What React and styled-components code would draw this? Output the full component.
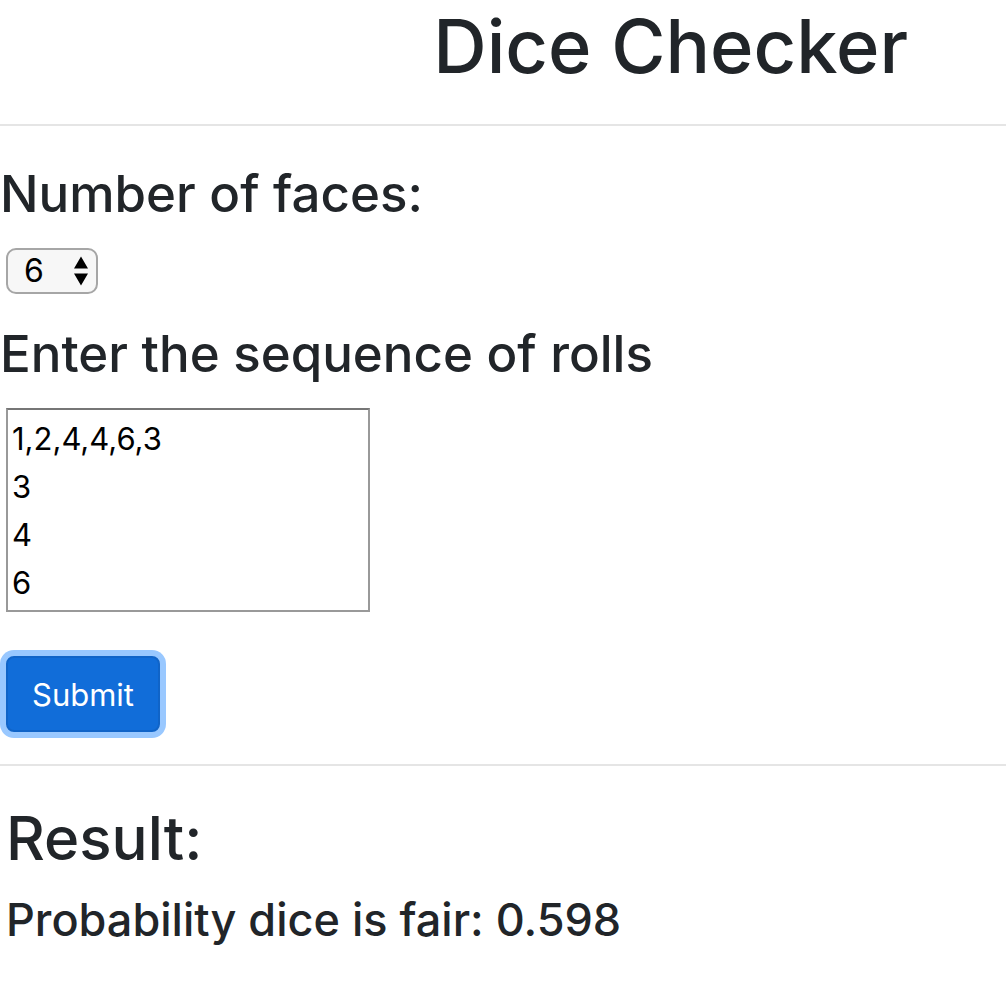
import React, { useState } from "react";
import styled, { createGlobalStyle } from "styled-components";

const Global = createGlobalStyle`
  *, *::before, *::after { box-sizing: border-box; }
  body {
    margin: 0;
    background: #fff;
    color: #212529;
    font-family: Inter, "Liberation Sans", sans-serif;
  }
`;

const Header = styled.header`
  padding: 0 98px 32px 0;
  border-bottom: 2px solid #e5e5e5;
  display: flex;
  justify-content: flex-end;
`;

const Heading = styled.h1`
  margin: 0;
  font-size: ${(p) => p.$size}px;
  line-height: ${(p) => p.$line}px;
  font-weight: 500;
`;

const Form = styled.form`
  padding: 32px 0;
  border-bottom: 2px solid #e5e5e5;
  display: flex;
  flex-direction: column;
  align-items: flex-start;
`;

const FieldLabel = styled.label`
  font-size: 51px;
  line-height: 72px;
  font-weight: 500;
`;

const SelectWrap = styled.div`
  display: grid;
  align-items: center;
  margin: 18px 6px 24px;

  & > * { grid-area: 1 / 1; }
  svg { justify-self: end; margin-right: 9px; pointer-events: none; }
`;

const Select = styled.select`
  appearance: none;
  width: 92px;
  height: 46px;
  padding: 0 16px;
  border: 2px solid #a6a6a6;
  border-radius: 10px;
  background: #f7f7f7;
  color: #000;
  font: 400 32px/40px Inter, sans-serif;
`;

const Rolls = styled.textarea`
  width: 364px;
  height: 204px;
  margin: 18px 6px 44px;
  padding: 5px 4px 0;
  border: 2px solid #999;
  border-top-color: #767676;
  border-radius: 0;
  background: #fff;
  color: #000;
  font: 400 31px/48px Inter, sans-serif;
  resize: none;
  overflow: hidden;
  outline: none;
`;

const Submit = styled.button`
  height: 76px;
  margin: 0 6px;
  padding: 2px 24px 0;
  border: 2px solid #1064c8;
  border-radius: 8px;
  background: #116dd9;
  color: #fff;
  font: 400 31px/48px Inter, sans-serif;
  box-shadow: 0 0 0 6px #99c8ff;
`;

const Result = styled.section`
  padding: 32px 6px;
`;

const Arrows = () => (
  <svg width="16" height="30" viewBox="0 0 16 30" aria-hidden="true">
    <path d="M8 0.5L15 12.5H1Z M8 29.5L1 17.5H15Z" fill="#000" />
  </svg>
);

export default function App() {
  const [faces, setFaces] = useState("6");
  const [rolls, setRolls] = useState("1,2,4,4,6,3\n3\n4\n6");
  return (
    <>
      <Global />
      <Header>
        <Heading $size={74} $line={92}>Dice Checker</Heading>
      </Header>
      <main>
        <Form onSubmit={(e) => e.preventDefault()}>
          <FieldLabel htmlFor="faces">Number of faces:</FieldLabel>
          <SelectWrap>
            <Select id="faces" value={faces} onChange={(e) => setFaces(e.target.value)}>
              {["4", "6", "8"].map((n) => <option key={n}>{n}</option>)}
            </Select>
            <Arrows />
          </SelectWrap>
          <FieldLabel htmlFor="rolls">Enter the sequence of rolls</FieldLabel>
          <Rolls id="rolls" value={rolls} onChange={(e) => setRolls(e.target.value)} />
          <Submit type="submit">Submit</Submit>
        </Form>
        <Result>
          <Heading as="h2" $size={60} $line={80}>Result:</Heading>
          <Heading as="h3" $size={45} $line={84}>Probability dice is fair: 0.598</Heading>
        </Result>
      </main>
    </>
  );
}
